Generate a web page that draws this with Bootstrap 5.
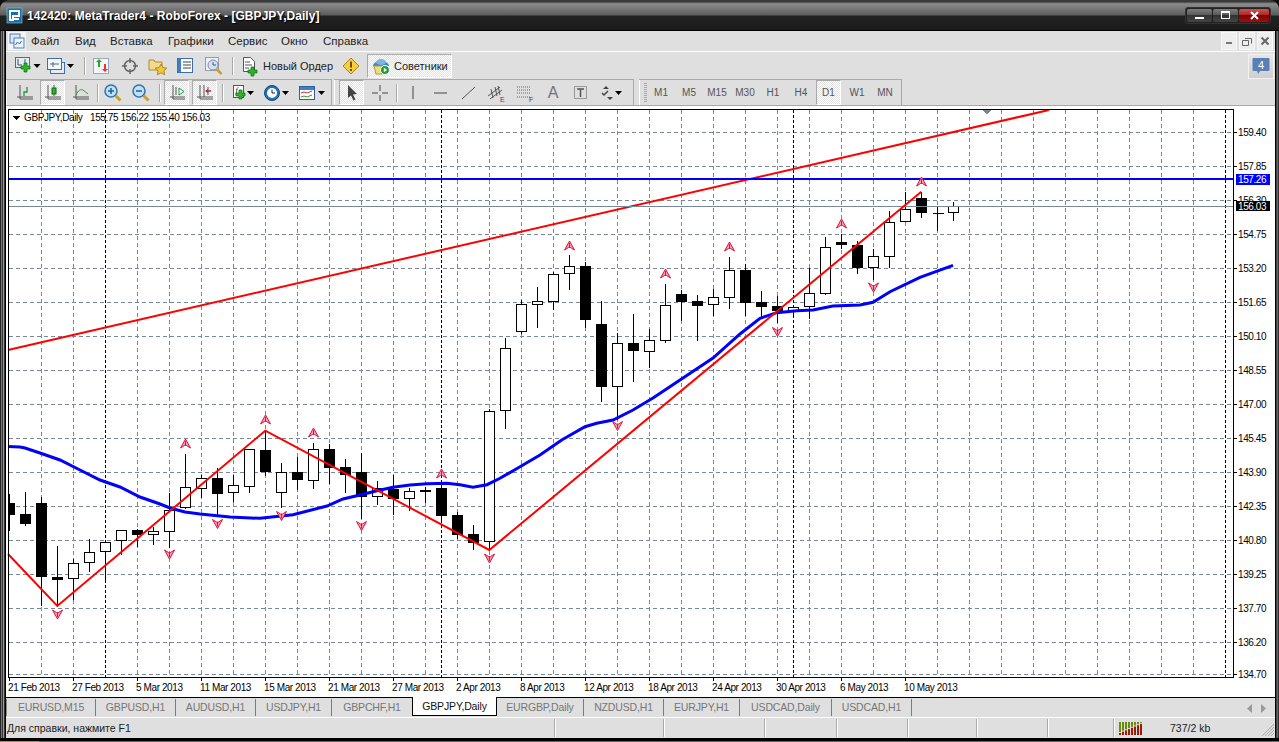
<!DOCTYPE html>
<html lang="ru"><head><meta charset="utf-8"><title>MetaTrader4</title>
<link href="https://cdn.jsdelivr.net/npm/bootstrap@5.3.0/dist/css/bootstrap.min.css" rel="stylesheet">
<style>
html,body{margin:0;width:1279px;height:742px;overflow:hidden;background:#333}
body{font:11px/1 "Liberation Sans",sans-serif;color:#222}
.mt-win{width:1279px;height:742px;position:relative;background:#111}
.mt-title{height:31px;border-radius:9px 9px 0 0;background:linear-gradient(#3a3a3a 0,#3a3a3a 2px,#777 3px,#8b8b8b 4px,#5c5c5c 15px,#222 16px,#1b1b1b 30px,#000 30px);padding-left:7px}
.mt-title-txt{color:#fff;font:bold 12px "Liberation Sans",sans-serif;margin-left:5px;text-shadow:1px 1px 1px #000;letter-spacing:.05px}
.mt-wbtns{margin-right:8px;border:1px solid #333;border-radius:3px;background:#222;padding:1px;gap:1px}
.mt-wb{width:25px;height:13px;border-radius:2px;background:linear-gradient(#7e7e7e,#555 50%,#333 50%,#444)}
.mt-wb.mt-x{width:30px;background:linear-gradient(#c55,#a22 50%,#800 50%,#911)}
.mt-body{height:707px}
.mt-rail-l{width:6px;background:linear-gradient(90deg,#222 0 1px,#777 1px 2px,#333 2px 3px,#999 3px 4px,#333 4px 5px,#000 5px)}
.mt-rail-r{width:4px;background:linear-gradient(90deg,#000 0 1px,#444 1px 2px,#666 2px 3px,#333 3px)}
.mt-main{width:1269px;background:#dfdfdf}
.mt-menu{height:20px;padding-left:2px}
.mt-menu-it{position:absolute;top:36px;font-size:11.5px;color:#222}
.mt-mdi{width:18px;height:18px;background:#f4f4f4}
.mt-mdibtn{width:16px;height:18px;background:#eee;border:1px solid #f6f6f6;margin-right:2px;color:#666}
.mt-wline{height:1px;background:#fff}
.mt-t1{height:27px;padding:1px 0 0 6px}
.mt-t2{height:27px;border-bottom:1px solid #a9a9a3}
.mt-grp{height:26px;border-top:1px solid #aaa;border-right:1px solid #aaa;box-shadow:inset 1px 0 #fff;flex:none}
.mt-ga{width:326px;padding-left:5px}
.mt-gb{width:300px;margin-left:2px;padding-left:4px}
.mt-gc{width:263px;margin-left:5px;padding-left:5px}
.mt-s{width:28px;height:25px;flex:none;display:flex;align-items:center;justify-content:center}
.mt-sep{flex:none;display:flex;justify-content:center;align-items:center;height:25px}
.mt-sep::after{content:"";width:1px;height:18px;background:#a8a8a8;box-shadow:1px 0 #fff}
.mt-on{background:conic-gradient(#fff 25%,#e2e2e2 0 50%,#fff 0 75%,#e2e2e2 0) 0 0/2px 2px;border:1px solid;border-color:#aaa #fff #fff #aaa}
.mt-grip{width:3px;height:19px;flex:none;background:repeating-linear-gradient(#aaa 0 1px,#dfdfdf 1px 2px)}
.mt-tf{font-size:10px;color:#555}
.mt-w8{width:8px}.mt-w4{width:4px}.mt-w7{width:7px}.mt-w5{width:5px}
.mt-w32{width:32px}.mt-w35{width:35px}.mt-w36{width:36px}
.mt-order{width:104px;justify-content:flex-start;padding-left:6px;gap:5px;font-size:11px;white-space:nowrap}
.mt-warn{width:21px}
.mt-adv{width:85px;margin-left:6px;height:24px;gap:3px;font-size:11px;padding-left:3px;justify-content:flex-start}
.mt-note{width:26px;height:25px;margin-right:1px;border:1px solid #f2f2f2;background:linear-gradient(#e6e6e6,#cfcfcf)}
.mt-sm{width:25px;height:25px;margin-left:1px;margin-right:2px}
.mt-chart{display:block;background:#fff;width:1269px;height:591px}
.mt-chart text{font:10px "Liberation Sans",sans-serif;fill:#000;letter-spacing:-.4px}
.mt-tabs{height:20px;border-top:1px solid #000;display:grid;grid-template-columns:90px 80px 80px 76px 80px 85px 87px 80px 76px 92px 80px 1fr;color:#767676;font-size:10.5px;letter-spacing:-.15px;position:relative}
.mt-tab{display:flex;align-items:center;justify-content:center;height:17px;margin-top:1px;border-right:1px solid #7d7d70}
.mt-tab:first-child{border-left:1px solid #8a8a80}
.mt-tab.mt-act{background:#fff;color:#111;height:19px;margin-top:-1px;border:1px solid #000;border-top:0}
.mt-tab.mt-pre{border-right:0}
.mt-arrows{position:absolute;right:9px;top:6px;gap:9px}
.mt-stat{height:20px;border-top:1px solid #fff;display:grid;grid-template-columns:549px 109px 101px 72px 71px 69px 71px 66px 1fr;font-size:10.5px;position:relative}
.mt-cell{display:flex;align-items:center;border-right:1px solid #aaa;box-shadow:1px 0 #fff;height:18px;margin-top:1px;padding-left:1px}
.mt-cell:nth-child(9){border:0;box-shadow:none;gap:27px;padding-left:5px}
.mt-size{position:absolute;right:0;bottom:0}
.mt-foot{height:4px;background:#000;position:relative}
.mt-foot::after{content:"";position:absolute;left:0;right:0;bottom:0;height:1px;background:linear-gradient(90deg,#e8791a 0 39px,#666 39px)}
.mt-ic{display:block;overflow:visible}
</style></head><body>
<svg width="0" height="0" class="position-absolute"><defs>
<g id="plus"><path d="M3 -4h3v3h3v3h-3v3h-3v-3h-3v-3h3z" fill="#2cb52c" stroke="#0a6d0a" stroke-width=".7"/></g>
<path id="caret" d="M0 0h7l-3.5 4z" fill="#000"/>
</defs></svg>
<div class="mt-win">
<div class="mt-title d-flex align-items-center">
<svg class="mt-ic" width="15" height="15" viewBox="0 0 15 15"><rect width="15" height="15" fill="#1b6fa8" stroke="#8cc" stroke-width=".6"/><path d="M3 3h9v5H6v4H3z" fill="none" stroke="#fff" stroke-width="2"/><path d="M7 11h5" stroke="#fff" stroke-width="2"/></svg>
<span class="mt-title-txt">142420: MetaTrader4 - RoboForex - [GBPJPY,Daily]</span>
<div class="mt-wbtns d-flex ms-auto">
<div class="mt-wb d-flex align-items-center justify-content-center"><svg width="11" height="11"><rect x="1" y="7" width="9" height="2" fill="#fff"/></svg></div>
<div class="mt-wb d-flex align-items-center justify-content-center"><svg width="11" height="11"><rect x="1.5" y="1.5" width="8" height="7" fill="none" stroke="#fff"/><path d="M1 2h9" stroke="#fff" stroke-width="2"/></svg></div>
<div class="mt-wb mt-x d-flex align-items-center justify-content-center"><svg width="11" height="11"><path d="M2 2l7 7M9 2l-7 7" stroke="#fff" stroke-width="2"/></svg></div>
</div></div>
<div class="mt-body d-flex">
<div class="mt-rail-l flex-none"></div>
<div class="mt-main d-flex flex-column">
<div class="mt-menu d-flex align-items-center">
<div class="mt-mdi d-flex align-items-center justify-content-center"><svg width="16" height="16" viewBox="0 0 16 16"><rect x="1" y="1" width="10" height="9" fill="#dbe7f5" stroke="#4b7fb8"/><rect x="5" y="5" width="10" height="10" fill="#eef4fb" stroke="#4b7fb8"/><path d="M6.500 12l2-3 2 2 2-3" fill="none" stroke="#3569a8"/></svg></div>
<span class="mt-menu-it" style="left:31px">Файл</span><span class="mt-menu-it" style="left:75px">Вид</span><span class="mt-menu-it" style="left:110px">Вставка</span><span class="mt-menu-it" style="left:168px">Графики</span><span class="mt-menu-it" style="left:228px">Сервис</span><span class="mt-menu-it" style="left:281px">Окно</span><span class="mt-menu-it" style="left:323px">Справка</span>
<div class="d-flex ms-auto">
<div class="mt-mdibtn d-flex align-items-center justify-content-center"><svg width="10" height="10"><rect x="2" y="6" width="6" height="2" fill="#777"/></svg></div>
<div class="mt-mdibtn d-flex align-items-center justify-content-center"><svg width="10" height="10"><path d="M3 2.500h6.500v5M.5 4.500h6v5h-6z" fill="none" stroke="#666"/></svg></div>
<div class="mt-mdibtn d-flex align-items-center justify-content-center"><svg width="10" height="10"><path d="M1.500 1.500l7 7M8.500 1.500l-7 7" stroke="#666" stroke-width="2"/></svg></div>
</div></div>
<div class="mt-wline"></div>
<div class="mt-t1 d-flex align-items-center">
<div class="mt-s mt-w32 justify-content-start"><svg class="mt-ic" width="30" height="20" viewBox="0 0 30 20"><rect x="3.500" y="1.500" width="14" height="10" fill="#e2ecf7" stroke="#3f6fa8"/><path d="M6 3v6h4M13 3v6" stroke="#456" fill="none"/><use href="#plus" x="9" y="11"/><use href="#caret" x="21.500" y="8"/></svg></div>
<div class="mt-s mt-w36 justify-content-start"><svg class="mt-ic" width="34" height="20" viewBox="0 0 34 20"><rect x="6.500" y="6.500" width="14" height="11" fill="#e2ecf7" stroke="#3f6fa8"/><rect x="3.500" y="2.500" width="14" height="11" fill="#f3f7fc" stroke="#3f6fa8"/><path d="M6 8h9M9 6v5" stroke="#567"/><use href="#caret" x="23" y="8"/></svg></div>
<div class="mt-sep mt-w8"></div>
<div class="mt-s"><svg class="mt-ic" width="18" height="18"><rect x=".5" y="1.500" width="15" height="15" fill="#f2f6fb" stroke="#9ab"/><path d="M5 10V5h-2l3-3 3 3H7v5z" fill="#2a2"/><path d="M10 7v5h2l-3 3-3-3h2V7z" fill="#e33" transform="translate(3 0)"/></svg></div>
<div class="mt-s"><svg class="mt-ic" width="18" height="18" fill="none" stroke="#666"><circle cx="9" cy="9" r="5.500" stroke-width="1.500"/><path d="M9 1v5M9 12v5M1 9h5M12 9h5" stroke-width="1.500"/></svg></div>
<div class="mt-s"><svg class="mt-ic" width="20" height="18"><path d="M1 3h5l1 2h7v8H1z" fill="#f4d98a" stroke="#a88a3a"/><path d="M13 7l1.800 3.600 4 .5-2.900 2.700.8 4-3.700-2-3.700 2 .8-4-2.900-2.700 4-.5z" fill="#f4c542" stroke="#b08a1c"/></svg></div>
<div class="mt-s"><svg class="mt-ic" width="18" height="16"><rect x=".5" y=".5" width="15" height="14" fill="#fff" stroke="#3f6fa8"/><rect x="1" y="1" width="3" height="13" fill="#3f7fc8"/><path d="M6 4h8M6 7h8M6 10h8" stroke="#445"/></svg></div>
<div class="mt-s"><svg class="mt-ic" width="20" height="20" fill="none"><rect x="1.500" y="1.500" width="13" height="13" fill="#eef" stroke="#99a"/><circle cx="9" cy="9" r="5" fill="#cfe3f7" stroke="#889"/><path d="M12.500 13l5 5" stroke="#c8a030" stroke-width="2.500"/><path d="M9 6v3h3" stroke="#555"/></svg></div>
<div class="mt-sep mt-w8"></div>
<div class="mt-s mt-order"><svg class="mt-ic" width="16" height="20"><path d="M1.500 1.500h7l4 4v10h-11z" fill="#fff" stroke="#555"/><path d="M3 6h5M3 9h7M3 12h4" stroke="#555"/><use href="#plus" x="6" y="15"/></svg><span>Новый Ордер</span></div>
<div class="mt-s mt-warn"><svg class="mt-ic" width="18" height="18"><path d="M9 1l8 8-8 8-8-8z" fill="#f7cf3e" stroke="#a98414"/><path d="M9 4.500v6M9 12v2" stroke="#6b5200" stroke-width="2"/></svg></div>
<div class="mt-s mt-adv mt-on"><svg class="mt-ic" width="20" height="20"><path d="M2 10a8 5 0 0 1 16 0z" fill="#3f88c4"/><ellipse cx="10" cy="6" rx="5" ry="3" fill="#7fb4de"/><path d="M3 10h12v8H5z" fill="#f0dc78" stroke="#b59a2e"/><circle cx="14" cy="14" r="4.500" fill="#1d9b3a" stroke="#fff"/><path d="M12.800 11.800l3.400 2.200-3.400 2.200z" fill="#fff"/></svg><span>Советники</span></div>
<div class="mt-note ms-auto d-flex align-items-center justify-content-center"><svg width="18" height="18"><path d="M1.500 1h15a1 1 0 0 1 1 1v11a1 1 0 0 1-1 1H8l-2 3-1-3H1.500a1 1 0 0 1-1-1V2a1 1 0 0 1 1-1z" fill="#5a7fb5"/><text x="9" y="11.500" text-anchor="middle" fill="#fff" font-size="11" font-family="Liberation Sans">4</text></svg></div>
</div>
<div class="mt-t2 d-flex">
<div class="mt-grp mt-ga d-flex">
<div class="mt-s"><svg class="mt-ic" width="18" height="18" fill="none" stroke="#555"><path d="M4 1v14h13" /><path d="M1 13h16" /><path d="M8 12V8h3V3" stroke="#1a9a3a" stroke-width="1.300"/></svg></div>
<div class="mt-s mt-on mt-sm"><svg class="mt-ic" width="18" height="18" fill="none" stroke="#555"><path d="M4 1v14h13M1 13h16"/><path d="M10 1v11" stroke="#1a7a2a"/><rect x="8" y="4" width="4" height="6" fill="#2cb52c" stroke="#116611"/></svg></div>
<div class="mt-s"><svg class="mt-ic" width="18" height="18" fill="none" stroke="#555"><path d="M4 1v14h13M1 13h16"/><path d="M4 11c2-5 5-6 7-5s3 3 5 4" stroke="#2a9a4a"/></svg></div>
<div class="mt-sep mt-w4"></div>
<div class="mt-s"><svg class="mt-ic" width="20" height="20" fill="none"><circle cx="8" cy="8" r="6" fill="#bfe0f7" stroke="#2f73b0" stroke-width="1.500"/><path d="M5 8h6M8 5v6" stroke="#1f5f9f" stroke-width="1.500"/><path d="M12.500 12.500l5 5" stroke="#c8a030" stroke-width="3"/></svg></div>
<div class="mt-s"><svg class="mt-ic" width="20" height="20" fill="none"><circle cx="8" cy="8" r="6" fill="#bfe0f7" stroke="#2f73b0" stroke-width="1.500"/><path d="M5 8h6" stroke="#1f5f9f" stroke-width="1.500"/><path d="M12.500 12.500l5 5" stroke="#c8a030" stroke-width="3"/></svg></div>
<div class="mt-sep mt-w8"></div>
<div class="mt-s mt-on mt-sm"><svg class="mt-ic" width="18" height="18" fill="none" stroke="#555"><path d="M5 1v14h12M2 13h15M8 3v8"/><path d="M11 4l5 3.500-5 3.500z" fill="#fff" stroke="#1a9a3a"/></svg></div>
<div class="mt-s mt-on mt-sm"><svg class="mt-ic" width="18" height="18" fill="none" stroke="#555"><path d="M4 1v14h13M1 13h16M8 1v12M12 3v8"/><path d="M10 7h5" stroke="#c22" stroke-width="1.500"/><path d="M12 5l-3 2 3 2z" fill="#c22" stroke="none"/></svg></div>
<div class="mt-sep mt-w7"></div>
<div class="mt-s mt-w32 justify-content-start"><svg class="mt-ic" width="30" height="20"><rect x="7.500" y="2.500" width="10" height="12" fill="#fff" stroke="#555"/><text x="9.500" y="10" font-size="8" font-family="Liberation Serif" font-style="italic">f</text><use href="#plus" x="10" y="11"/><use href="#caret" x="21" y="8"/></svg></div>
<div class="mt-s mt-w35 justify-content-start"><svg class="mt-ic" width="32" height="20"><circle cx="14" cy="10" r="7.500" fill="#2170b8" stroke="#124a80"/><circle cx="14" cy="10" r="5" fill="#fff"/><path d="M14 6.500V10h3" stroke="#124" fill="none"/><use href="#caret" x="24" y="8"/></svg></div>
<div class="mt-s mt-w35 justify-content-start"><svg class="mt-ic" width="34" height="20"><rect x="6.500" y="3.500" width="15" height="13" fill="#fff" stroke="#2f5f9f"/><rect x="7" y="4" width="14" height="3" fill="#3f7fc8"/><path d="M8 10l3-1 3 1 5-2" stroke="#c33" fill="none"/><path d="M8 14l3-1 3 1 5-2" stroke="#393" fill="none"/><use href="#caret" x="25" y="8"/></svg></div>
</div>
<div class="mt-grp mt-gb d-flex">
<div class="mt-s mt-on mt-sm"><svg class="mt-ic" width="14" height="18"><path d="M3 1l9 9-4 .500 2.500 5-2 1-2.500-5L3 14z" fill="#444"/></svg></div>
<div class="mt-s"><svg class="mt-ic" width="18" height="18" stroke="#444"><path d="M9 1v6M9 11v6M1 9h6M11 9h6"/></svg></div>
<div class="mt-sep mt-w5"></div>
<div class="mt-s"><svg class="mt-ic" width="18" height="18" stroke="#444"><path d="M9 2v13"/></svg></div>
<div class="mt-s"><svg class="mt-ic" width="18" height="18" stroke="#444"><path d="M2 9h13"/></svg></div>
<div class="mt-s"><svg class="mt-ic" width="18" height="18" stroke="#555"><path d="M2 15L15 3"/></svg></div>
<div class="mt-s"><svg class="mt-ic" width="20" height="20" fill="none" stroke="#555"><path d="M1 13l12-9M3 16l12-9M4 6l2 9M8 4l2 9M11 3l2 9"/><text x="13" y="19" font-size="7" fill="#444" stroke="none" font-family="Liberation Sans">E</text></svg></div>
<div class="mt-s"><svg class="mt-ic" width="18" height="18" stroke="#666" stroke-dasharray="1 1"><path d="M1 3h13M1 6h13M1 9h13M1 13h13"/><text x="13" y="18" font-size="7" fill="#444" stroke="none" font-family="Liberation Sans">F</text></svg></div>
<div class="mt-s"><span class="fs-6 text-secondary">A</span></div>
<div class="mt-s"><svg class="mt-ic" width="16" height="16" fill="none"><rect x="1.500" y="1.500" width="12" height="12" stroke="#555" stroke-dasharray="1 1"/><path d="M4 4h7M7.500 4v8" stroke="#555" stroke-width="1.500"/></svg></div>
<div class="mt-s mt-w35 justify-content-start"><svg class="mt-ic" width="32" height="20"><path d="M8 6l3-3 3 3zM12 14l3 3 3-3z" fill="#444"/><path d="M7 10l2 2 4-4" stroke="#444" fill="none" stroke-width="1.500"/><use href="#caret" x="20" y="8"/></svg></div>
</div>
<div class="mt-grp mt-gc d-flex align-items-center mt-tf">
<div class="mt-grip"></div>
<div class="mt-s">M1</div><div class="mt-s">M5</div><div class="mt-s">M15</div><div class="mt-s">M30</div><div class="mt-s">H1</div><div class="mt-s">H4</div><div class="mt-s mt-on mt-sm">D1</div><div class="mt-s">W1</div><div class="mt-s">MN</div>
</div>
</div>
<svg class="mt-chart" id="chart" viewBox="6 106 1269 591" shape-rendering="crispEdges"></svg>
<div class="mt-tabs">
<div class="mt-tab">EURUSD,M15</div><div class="mt-tab">GBPUSD,H1</div><div class="mt-tab">AUDUSD,H1</div><div class="mt-tab">USDJPY,H1</div><div class="mt-tab mt-pre">GBPCHF,H1</div><div class="mt-tab mt-act">GBPJPY,Daily</div><div class="mt-tab">EURGBP,Daily</div><div class="mt-tab">NZDUSD,H1</div><div class="mt-tab">EURJPY,H1</div><div class="mt-tab">USDCAD,Daily</div><div class="mt-tab">USDCAD,H1</div>
<div class="mt-arrows d-flex"><svg width="5" height="9"><path d="M5 0v9L0 4.500z" fill="#999"/></svg><svg width="5" height="9"><path d="M0 0v9l5-4.500z" fill="#999"/></svg></div>
</div>
<div class="mt-stat">
<div class="mt-cell">Для справки, нажмите F1</div><div class="mt-cell"></div><div class="mt-cell"></div><div class="mt-cell"></div><div class="mt-cell"></div><div class="mt-cell"></div><div class="mt-cell"></div><div class="mt-cell"></div>
<div class="mt-cell"><svg id="conn" width="24" height="13"></svg><span>737/2 kb</span></div>
<svg class="mt-size" width="15" height="15" stroke="#aaa"><path d="M14 2L2 14M14 5L5 14M14 8L8 14M14 11L11 14"/></svg>
</div>
</div>
<div class="mt-rail-r flex-none"></div>
</div>
<div class="mt-foot"></div>
</div>
<script>
const L=8.5,R=1233.5,T=109.5,B=677.5;let s='';
for(let x=41.5;x<1233;x+=32)if(x!=105.5&&x!=1225.5)s+=`<path d="M${x} ${T}V${B}" stroke="#778899" stroke-dasharray="4 3"/>`;
const ys=[132.5,166.5,200.5,234.5,268.5,302.5,336.5,370.5,404.5,438.5,472.5,506.5,540.5,574.5,608.5,642.5,674.5];
const pr=["159.40","157.85","156.30","154.75","153.20","151.65","150.10","148.55","147.00","145.45","143.90","142.35","140.80","139.25","137.70","136.20","134.70"];
ys.forEach((y,i)=>{s+=`<path d="M${L} ${y}H${R}" stroke="#778899" stroke-dasharray="4 3"/><path d="M${R} ${y}h3" stroke="#000"/><text x="1238" y="${y+3.5}">${pr[i]}</text>`});
[105.5,441.5,793.5,1225.5].forEach(x=>s+=`<path d="M${x} ${T}V${B}" stroke="#000" stroke-dasharray="3 2"/>`);
// candles: [body-top, body-bottom, wick-high, wick-low, black]
const C=[[503,515,494,531,1],[514,524,492,526,1],[503,577,497,606,1],[577,580,546,607,1],[563,579,559,600,0],[552,563,539,572,0],[542,552,540,580,0],[530,541,530,555,0],[530,535,529,547,1],[531,535,527,545,0],[510,532,493,548,0],[487,508,454,509,0],[478,489,475,498,0],[478,494,468,515,1],[485,493,475,502,0],[449,487,449,493,0],[450,472,430,476,1],[472,493,463,508,0],[472,480,457,490,1],[449,481,443,489,0],[449,468,444,484,1],[467,475,459,493,1],[472,497,453,519,1],[488,497,481,505,0],[489,499,475,515,1],[491,499,488,511,0],[490,492,487,503,1],[488,516,486,520,1],[515,535,512,539,1],[534,543,525,550,1],[411,542,409,550,0],[348,411,338,429,0],[304,332,300,334,0],[301,305,287,328,0],[274,302,272,310,0],[266,274,255,290,0],[266,320,262,328,1],[324,387,301,402,1],[343,387,333,420,0],[343,351,314,382,1],[340,352,329,368,0],[305,341,284,343,0],[294,302,290,321,1],[301,306,295,341,1],[297,305,289,316,0],[270,298,257,309,0],[270,303,264,316,1],[302,307,291,318,1],[306,311,296,323,1],[307,311,307,318,0],[293,307,268,319,0],[247,294,237,295,0],[242,245,234,249,1],[245,268,241,274,1],[256,268,249,280,0],[222,257,211,268,0],[209,222,192,222,0],[198,213,192,218,1],[213,214,206,231,2],[206,213,202,221,0]];
s+=`<defs><clipPath id="pl"><rect x="9" y="110" width="1224" height="567"/></clipPath></defs><g clip-path="url(#pl)">`;
C.forEach((c,k)=>{const x=9.5+16*k;
s+=`<path d="M${x} ${c[2]}V${c[3]}" stroke="#000"/>`;
if(c[4]==2)s+=`<path d="M${x-5} ${c[0]+.5}h11" stroke="#000"/>`;
else if(c[4]==1)s+=`<rect x="${x-5.5}" y="${c[0]}" width="11" height="${c[1]-c[0]}" fill="#000"/>`;
else s+=`<rect x="${x-5}" y="${c[0]+.5}" width="10" height="${c[1]-c[0]-1}" fill="#fff" stroke="#000"/>`;});
s+=`</g>`;
const H='shape-rendering="auto"';
s+=`<path ${H} d="M8 350L1049 110" stroke="#f00" stroke-width="2" fill="none"/>`;
s+=`<path d="M${L} 179H${R}" stroke="#00f" stroke-width="2"/><path d="M${L} 206.500H${R}" stroke="#778899"/>`;
s+=`<path ${H} d="M8 446.500L20 447 25 448 40 453 60 460 80 470 100 480 120 487 140 497 160 504 170 508 185 512 200 514 215 515.500 230 517 260 518.300 293 514.700 327 506 343 499 360 495 377 490.700 393 487.300 410 485 427 483.700 447 483.300 460 484.700 473 487.300 487 484.700 500 478.300 520 466.700 540 455 561.700 440 585 426.700 596.700 423.300 613 420 633 410 653 398 680 380 713 358 740 334 760 318.300 776.700 312.700 796.700 310.700 813 310 833 306 860 305 873 302.300 890 291.700 920 277.300 953 265.300" fill="none" stroke="#00f" stroke-width="3"/>`;
s+=`<path ${H} d="M8 554L57.300 606 265.300 430.700 489.300 550 921.300 191.700" fill="none" stroke="#f00" stroke-width="2"/>`;
const up=[[185,444],[265,420],[313,433],[441,474],[569,246],[665,274],[729,247],[841,224],[921,182]],dn=[[57,614],[169,554],[217,523.5],[281,515.5],[361,525.5],[489,558],[617,425.5],[777,331.5],[873,287]];
const ar='M0 -5L5 4 1 1.500 -1 1.500 -5 4Z M0 -3V1.500';
up.forEach(p=>s+=`<path ${H} d="${ar}" transform="translate(${p[0]+.5} ${p[1]})" fill="#f3a0b4" stroke="#dc143c"/>`);
dn.forEach(p=>s+=`<path ${H} d="${ar}" transform="translate(${p[0]+.5} ${p[1]}) scale(1 -1)" fill="#f3a0b4" stroke="#dc143c"/>`);
s+=`<path d="M${L} ${T}H${R}V${B}H${L}Z" fill="none" stroke="#000"/>`;
s+=`<path d="M983 110h8l-4 5z" fill="#778899"/>`;
s+=`<path d="M12 116h8l-4 4z" fill="#000"/><text x="24" y="121">GBPJPY,Daily</text><text x="90" y="121">155.75 156.22 155.40 156.03</text>`;
s+=`<rect x="1236" y="174" width="34" height="11" fill="#00f"/><text x="1238" y="183" style="fill:#fff">157.26</text>`;
s+=`<rect x="1236" y="201" width="34" height="10" fill="#000"/><text x="1238" y="210" style="fill:#fff">156.03</text>`;
["21 Feb 2013","27 Feb 2013","5 Mar 2013","11 Mar 2013","15 Mar 2013","21 Mar 2013","27 Mar 2013","2 Apr 2013","8 Apr 2013","12 Apr 2013","18 Apr 2013","24 Apr 2013","30 Apr 2013","6 May 2013","10 May 2013"].forEach((t,i)=>{const x=8+64*i;s+=`<path d="M${x+1.5} ${B}v3" stroke="#000"/><text x="${x}" y="691">${t}</text>`});
document.getElementById('chart').innerHTML=s;
let c='';for(let i=0;i<8;i++){const x=i*3,h=2+i*1.3;c+=`<rect x="${x}" y="0" width="2" height="${13-h-1}" fill="#6b8a12"/><rect x="${x}" y="${13-h}" width="2" height="${h}" fill="#9b1b0a"/>`}
document.getElementById('conn').innerHTML=c;
</script>
</body></html>
